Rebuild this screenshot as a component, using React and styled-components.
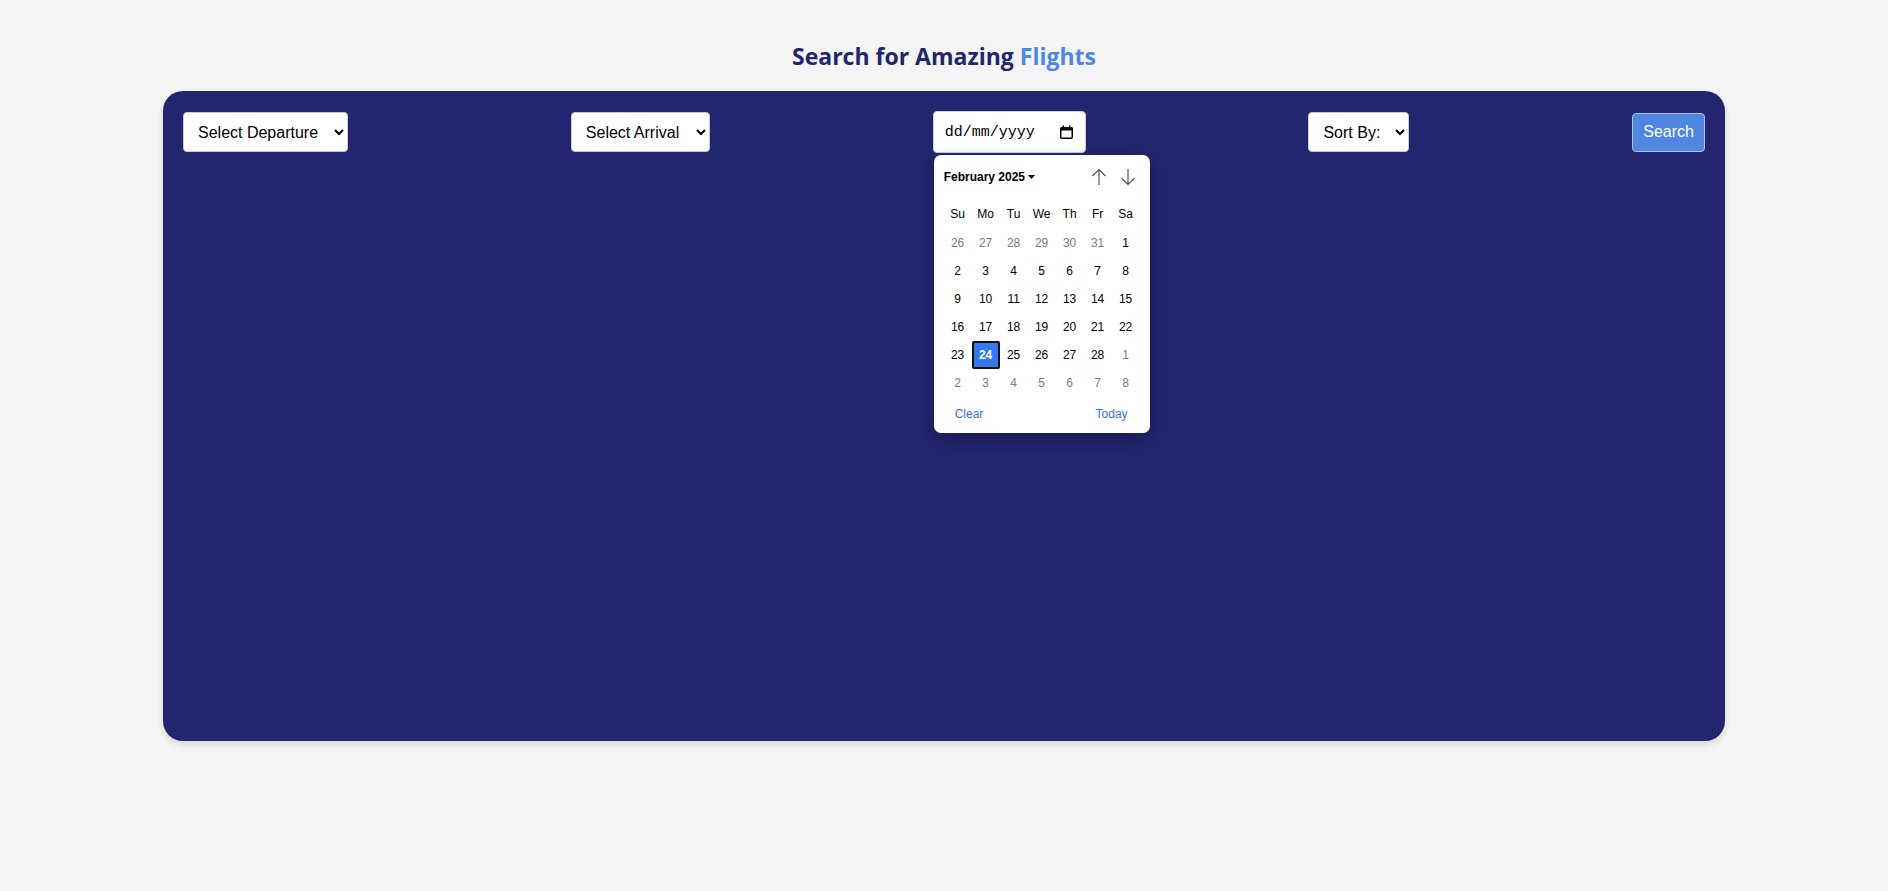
import React from "react";
import styled, { createGlobalStyle } from "styled-components";

const GlobalStyle = createGlobalStyle`
  html, body { margin: 0; padding: 0; background: #f4f4f4; }
  body { font-family: "Liberation Sans", Arial, sans-serif; }
  * { box-sizing: border-box; }
`;

const Page = styled.div`
  min-height: 891px;
  background: #f4f4f4;
  padding-top: 40px;
`;

const Title = styled.h2`
  margin: 0 0 19px;
  text-align: center;
  font-family: "Open Sans", sans-serif;
  font-weight: 700;
  font-size: 23px;
  line-height: 32px;
  color: #21266e;
`;

const Accent = styled.span`
  color: #4f86df;
`;

const Card = styled.div`
  width: 1562px;
  height: 650px;
  margin: 0 auto;
  background: #21266e;
  border-radius: 20px;
  padding: 20px;
  box-shadow: 0 3px 6px rgba(0, 0, 0, 0.12);
`;

const Toolbar = styled.div`
  display: flex;
  justify-content: space-between;
  align-items: center;
`;

const Select = styled.select`
  font-family: "Liberation Sans", Arial, sans-serif;
  font-size: 16px;
  padding: 10px 12px 10px 10px;
  height: 40px;
  background: #fff;
  color: #000;
  border: 1px solid #ccc;
  border-radius: 4px;
`;

const DateWrap = styled.div`
  position: relative;
`;

const DateField = styled.div`
  width: 153px;
  height: 42px;
  background: #fff;
  border: 1px solid #ccc;
  border-radius: 4px;
  display: flex;
  align-items: center;
  padding: 0 12px 0 11px;
  justify-content: space-between;
  font-family: "Liberation Mono", monospace;
  font-size: 15px;
  color: #000;
`;

const SearchButton = styled.button`
  font-family: "Liberation Sans", Arial, sans-serif;
  font-size: 16px;
  height: 39px;
  padding: 0 10px;
  background: #4f86df;
  color: #fff;
  border: 1px solid #a9c1ee;
  border-radius: 4px;
  cursor: pointer;
`;

const Popup = styled.div`
  position: absolute;
  top: calc(100% + 2px);
  left: 1px;
  width: 216px;
  height: 278px;
  background: #fff;
  border-radius: 7px;
  box-shadow: 0 6px 18px rgba(0, 0, 0, 0.28);
  padding: 0 10px;
  font-family: "Liberation Sans", Arial, sans-serif;
  font-size: 12px;
  color: #000;
  z-index: 5;
`;

const PopupHeader = styled.div`
  height: 46px;
  display: flex;
  align-items: center;
  justify-content: space-between;
  padding-bottom: 2px;
`;

const MonthLabel = styled.div`
  font-weight: 700;
  display: flex;
  align-items: center;
  gap: 3px;
`;

const NavGroup = styled.div`
  display: flex;
  gap: 13px;
  margin-right: 4px;
`;

const Grid = styled.div`
  display: grid;
  grid-template-columns: repeat(7, 28px);
  grid-auto-rows: 28px;
`;

const WeekDay = styled.div`
  display: flex;
  align-items: center;
  justify-content: center;
  margin-bottom: 2px;
`;

const Day = styled.div`
  display: flex;
  align-items: center;
  justify-content: center;
  color: ${(p) => (p.$muted ? "#7a7a7a" : "#000")};
  ${(p) =>
    p.$selected &&
    `
    background: #3578f0;
    color: #fff;
    font-weight: 700;
    border: 2px solid #111;
    border-radius: 2px;
  `}
`;

const Footer = styled.div`
  display: flex;
  justify-content: space-between;
  padding: 0 12px 0 11px;
  margin-top: 10px;
`;

const LinkButton = styled.span`
  color: #3a72d8;
  font-size: 12px;
`;

const CalendarIcon = () => (
  <svg width="13" height="14" viewBox="0 0 13 14">
    <rect x="0.75" y="2.75" width="11.5" height="10.5" rx="1" fill="none" stroke="#000" strokeWidth="1.5" />
    <rect x="0.5" y="2.5" width="12" height="3" fill="#000" />
    <rect x="2.5" y="0.5" width="1.5" height="3" fill="#000" />
    <rect x="9" y="0.5" width="1.5" height="3" fill="#000" />
  </svg>
);

const ArrowUp = () => (
  <svg width="16" height="18" viewBox="0 0 16 18">
    <path d="M8 17V1.5M1.5 8L8 1.5L14.5 8" fill="none" stroke="#555" strokeWidth="1.2" />
  </svg>
);

const ArrowDown = () => (
  <svg width="16" height="18" viewBox="0 0 16 18">
    <path d="M8 1V16.5M1.5 10L8 16.5L14.5 10" fill="none" stroke="#555" strokeWidth="1.2" />
  </svg>
);

const Caret = () => (
  <svg width="7" height="4" viewBox="0 0 7 4">
    <path d="M0 0H7L3.5 4Z" fill="#000" />
  </svg>
);

const weekDays = ["Su", "Mo", "Tu", "We", "Th", "Fr", "Sa"];

const days = [
  ...[26, 27, 28, 29, 30, 31].map((d) => ({ d, muted: true })),
  ...Array.from({ length: 28 }, (_, i) => ({ d: i + 1, muted: false })),
  ...[1, 2, 3, 4, 5, 6, 7, 8].map((d) => ({ d, muted: true })),
];

export default function App() {
  return (
    <>
      <GlobalStyle />
      <Page>
        <Title>
          Search for Amazing <Accent>Flights</Accent>
        </Title>
        <Card>
          <Toolbar>
            <Select defaultValue="">
              <option value="">Select Departure</option>
            </Select>
            <Select defaultValue="">
              <option value="">Select Arrival</option>
            </Select>
            <DateWrap>
              <DateField>
                <span>dd/mm/yyyy</span>
                <CalendarIcon />
              </DateField>
              <Popup>
                <PopupHeader>
                  <MonthLabel>
                    February 2025 <Caret />
                  </MonthLabel>
                  <NavGroup>
                    <ArrowUp />
                    <ArrowDown />
                  </NavGroup>
                </PopupHeader>
                <Grid>
                  {weekDays.map((w) => (
                    <WeekDay key={w}>{w}</WeekDay>
                  ))}
                  {days.map((x, i) => (
                    <Day key={i} $muted={x.muted} $selected={!x.muted && x.d === 24}>
                      {x.d}
                    </Day>
                  ))}
                </Grid>
                <Footer>
                  <LinkButton>Clear</LinkButton>
                  <LinkButton>Today</LinkButton>
                </Footer>
              </Popup>
            </DateWrap>
            <Select defaultValue="">
              <option value="">Sort By:</option>
            </Select>
            <SearchButton>Search</SearchButton>
          </Toolbar>
        </Card>
      </Page>
    </>
  );
}
